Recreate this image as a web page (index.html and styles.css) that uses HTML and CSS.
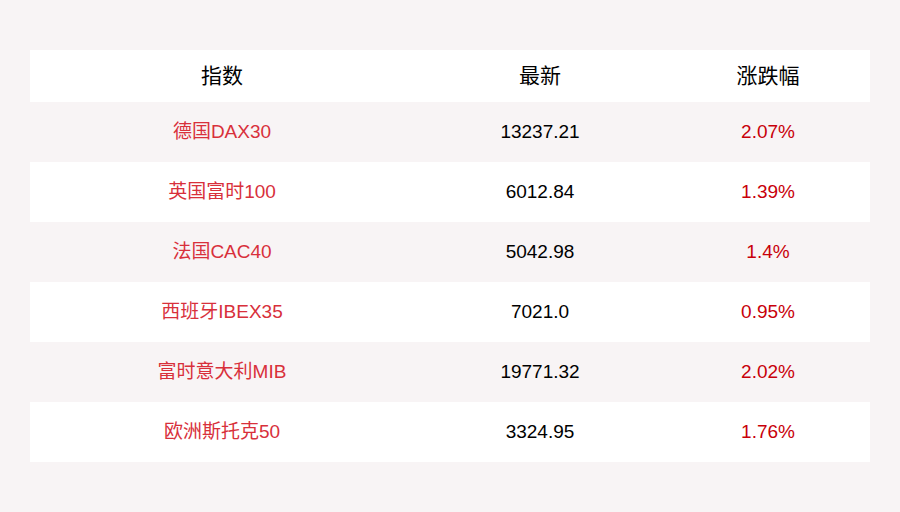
FILE: index.html
```html
<!DOCTYPE html>
<html>
<head>
<meta charset="utf-8">
<link rel="stylesheet" href="styles.css">
</head>
<body>
<div class="wrap">
  <table class="tbl">
    <thead>
      <tr><th class="c1">指数</th><th class="c2">最新</th><th class="c3">涨跌幅</th></tr>
    </thead>
    <tbody>
      <tr class="alt"><td class="name">德国DAX30</td><td>13237.21</td><td class="pct">2.07%</td></tr>
      <tr><td class="name">英国富时100</td><td>6012.84</td><td class="pct">1.39%</td></tr>
      <tr class="alt"><td class="name">法国CAC40</td><td>5042.98</td><td class="pct">1.4%</td></tr>
      <tr><td class="name">西班牙IBEX35</td><td>7021.0</td><td class="pct">0.95%</td></tr>
      <tr class="alt"><td class="name">富时意大利MIB</td><td>19771.32</td><td class="pct">2.02%</td></tr>
      <tr><td class="name">欧洲斯托克50</td><td>3324.95</td><td class="pct">1.76%</td></tr>
    </tbody>
  </table>
</div>
</body>
</html>
```
FILE: styles.css
```css
html, body {
  margin: 0;
  padding: 0;
  background: #f8f4f5;
  font-family: "Liberation Sans", Arial, "Noto Sans CJK SC", sans-serif;
}
.wrap {
  padding: 50px 30px 0 30px;
}
.tbl {
  width: 840px;
  border-collapse: collapse;
  table-layout: fixed;
}
.tbl th, .tbl td {
  padding: 0;
  text-align: center;
  color: #000;
  line-height: 20px;
}
.tbl th {
  height: 52px;
  background: #ffffff;
  font-weight: normal;
  font-size: 21px;
}
.c1 { width: 384px; }
.c2 { width: 252px; }
.c3 { width: 204px; }
.tbl td {
  height: 60px;
  font-size: 19px;
  background: #ffffff;
}
.tbl tr.alt td {
  background: #f8f4f5;
}
.tbl td.name {
  color: #d8303b;
}
.tbl td.pct {
  color: #c8000a;
}
```
